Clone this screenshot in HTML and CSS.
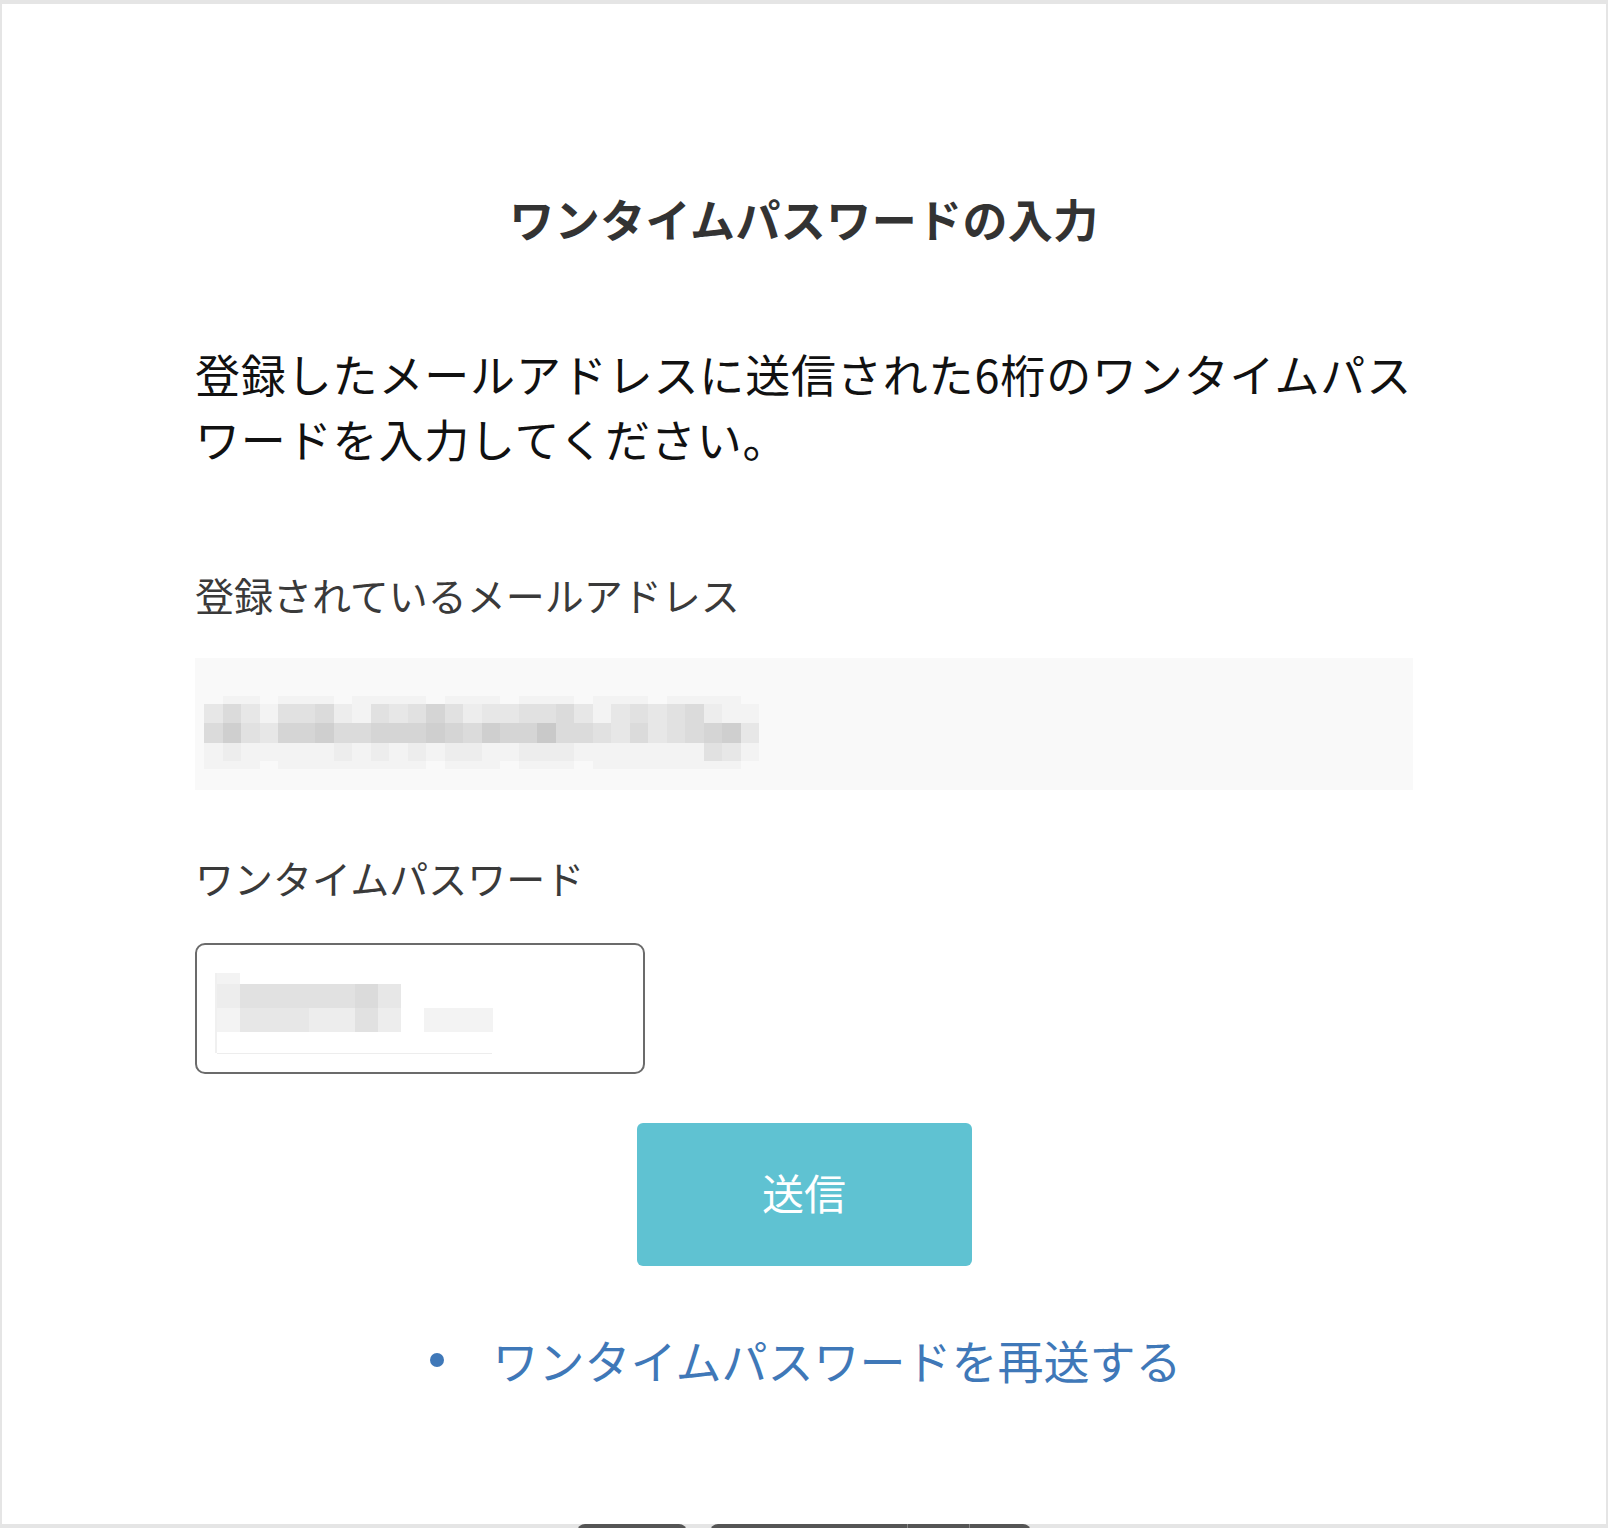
FILE: index.html
```html
<!DOCTYPE html>
<html lang="ja">
  <head>
    <meta charset="UTF-8" />
    <meta name="viewport" content="width=device-width, initial-scale=1.0" />
    <title>ワンタイムパスワードの入力</title>
    <link rel="stylesheet" href="styles.css">
  </head>
  <body>
    <div class="frame">
      <div class="contents">
        <h1 class="title">ワンタイムパスワードの入力</h1>
        <p class="lead">登録したメールアドレスに送信された6桁のワンタイムパスワードを入力してください。</p>

        <div class="form-element">
          <div class="label">登録されているメールアドレス</div>
          <div class="mail-box">
            <div class="mosaic" id="mail-mosaic" data-cell="18.5"></div>
          </div>
        </div>

        <form action="" id="otp-form">
          <div class="form-element">
            <label class="label label-otp" for="otp">ワンタイムパスワード</label>
            <div class="otp-input" id="otp">
              <div class="mosaic" id="otp-mosaic" data-cell="23"></div>
              <div class="otp-line"></div>
            </div>
          </div>
          <div class="submit-row">
            <button type="submit" class="submit-button">送信</button>
          </div>
        </form>

        <ul class="links">
          <li><a href="#">ワンタイムパスワードを再送する</a></li>
        </ul>
      </div>
    </div>

    <!-- toolbar tabs peeking in at the bottom -->
    <div class="dock">
      <span class="dock-tab tab-left"></span>
      <span class="dock-tab tab-right"><i></i><i></i></span>
    </div>

    <script>
      // masked values: each row is a height and a string of shades (0 = background)
      const mosaics = {
        "mail-mosaic": [
          { h: 8, cells: "011011101111011101110111011110" },
          { h: 19, cells: "353144521434642334453134345211" },
          { h: 20, cells: "574366755666765766855435345673" },
          { h: 18, cells: "121111121212122112221111111431" },
          { h: 8, cells: "111011111111011101110111111110" },
        ],
        "otp-mosaic": [
          { h: 11, cells: "10000000" },
          { h: 24, cells: "24444453" },
          { h: 24, cells: "133322420111" },
        ],
      };

      function shade(v) {
        const g = 249 - v * 6;
        return "rgb(" + g + "," + g + "," + g + ")";
      }

      function renderMosaic(id) {
        const box = document.getElementById(id);
        const size = box.dataset.cell + "px";
        for (let row of mosaics[id]) {
          const line = document.createElement("div");
          line.className = "mosaic-row";
          line.style.height = row.h + "px";
          for (let c of row.cells) {
            const cell = document.createElement("span");
            cell.style.width = size;
            if (c !== "0") {
              cell.style.background = shade(Number(c));
            }
            line.appendChild(cell);
          }
          box.appendChild(line);
        }
      }

      renderMosaic("mail-mosaic");
      renderMosaic("otp-mosaic");
    </script>
  </body>
</html>
```

FILE: styles.css
```css
* {
  box-sizing: border-box;
}

body {
  margin: 0;
  background-color: #e5e5e5;
  font-family: "Noto Sans CJK JP", "Noto Sans", sans-serif;
  color: #111;
}

.frame {
  position: relative;
  height: 1520px;
  margin: 4px 2px 0 2px;
  background-color: #fff;
  padding-top: 183px;
}

.contents {
  width: 1218px;
  margin: 0 auto;
}

.title {
  margin: 0;
  font-size: 45px;
  line-height: 63px;
  font-weight: 700;
  text-align: center;
  color: #333;
  letter-spacing: 0.4px;
}

.lead {
  margin: 91px 0 0 0;
  font-size: 45px;
  line-height: 65px;
  letter-spacing: 0.85px;
  color: #111;
}

.label {
  display: block;
  margin-top: 96px;
  font-size: 39px;
  line-height: 55px;
  color: #3a3a3a;
}

.label-otp {
  margin-top: 60px;
}

.mail-box {
  height: 132px;
  margin-top: 36px;
  padding: 38px 0 0 9px;
  background-color: #f9f9f9;
}

.mosaic-row {
  display: flex;
}

.mosaic-row span {
  flex: none;
  height: 100%;
}

.otp-input {
  position: relative;
  width: 450px;
  height: 131px;
  margin-top: 38px;
  padding: 28px 0 0 18px;
  border: 2px solid #6b6b6b;
  border-radius: 10px;
  background-color: #fff;
}

.otp-input #otp-mosaic {
  border-left: 2px solid #f0f0f0;
  height: 80px;
}

.otp-line {
  position: absolute;
  left: 20px;
  top: 108px;
  width: 275px;
  height: 1px;
  background-color: #ededed;
}

.submit-row {
  display: flex;
  justify-content: center;
  margin-top: 49px;
}

.submit-button {
  width: 335px;
  height: 143px;
  border: none;
  border-radius: 6px;
  background-color: #5fc2d2;
  color: #fff;
  font-family: inherit;
  font-size: 42px;
  padding: 0 0 6px 0;
}

.links {
  display: flex;
  justify-content: center;
  margin: 62px 0 0 0;
  padding: 0;
  list-style: none;
}

.links li {
  display: flex;
  align-items: center;
  gap: 48px;
  font-size: 46px;
  line-height: 63px;
}

.links li::before {
  content: "";
  width: 14px;
  height: 14px;
  margin-left: 4px;
  border-radius: 50%;
  background-color: #3f78b8;
}

.links a {
  color: #3f78b8;
  text-decoration: none;
}

.dock {
  position: absolute;
  left: 0;
  top: 1524px;
  width: 100%;
  height: 4px;
}

.dock-tab {
  position: absolute;
  top: 0;
  height: 12px;
  border-radius: 8px 8px 0 0;
  background-color: #555;
}

.tab-left {
  left: 577px;
  width: 110px;
}

.tab-right {
  left: 710px;
  width: 321px;
}

.tab-right i {
  position: absolute;
  top: 0;
  width: 1px;
  height: 12px;
  background-color: #888;
}

.tab-right i:first-child {
  left: 197px;
}

.tab-right i:last-child {
  left: 259px;
}
```
